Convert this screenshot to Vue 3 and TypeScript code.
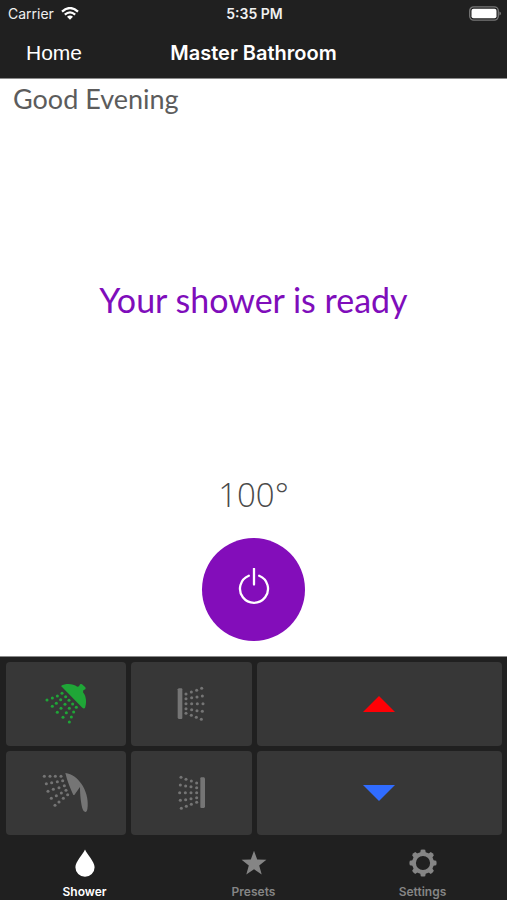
<script setup lang="ts">
import { ref } from 'vue'

type Point = [number, number]

interface Outlet {
  id: string
  label: string
  shape: string
  dots: Point[]
}

const overheadDots: Point[] = [
  [60, 40], [46, 48], [31, 54], [15, 60],
  [71, 50], [56, 59], [43, 70], [31, 79],
  [81, 61], [69, 73], [57, 85], [46, 97],
  [92, 72], [82, 85], [73, 98], [63, 112],
  [103, 82], [95, 96], [88, 111], [82, 126],
]

const handheldDots: Point[] = [
  [7, 22], [24, 22], [40, 22], [57, 22],
  [13, 44], [29, 41], [46, 38], [62, 35],
  [18, 67], [34, 61], [51, 56], [67, 50],
  [28, 88], [43, 80], [58, 72], [72, 64],
  [39, 109], [51, 99], [64, 88], [77, 77],
]

const sideDots: Point[] = [
  [57, 42], [57, 56], [57, 71], [57, 86], [57, 100],
  [73, 36], [74, 53], [74, 71], [74, 89], [73, 106],
  [89, 31], [90, 51], [91, 71], [90, 92], [88, 112],
  [104, 25], [106, 48], [108, 71], [106, 94], [103, 118],
]

const outlets: Outlet[] = [
  {
    id: 'overhead',
    label: 'Overhead shower',
    shape: 'M57 18C70 10 92 10 106 20L111 19L114 13Q117 11 120 13L130 22Q132 25 130 28L124 31L123 37C134 50 134 70 129 84Q125 87 121 83Z',
    dots: overheadDots,
  },
  {
    id: 'left',
    label: 'Left body spray',
    shape: 'M35 25H43Q46 25 46 28V114Q46 117 43 117H35L32 114V28Z',
    dots: sideDots,
  },
  {
    id: 'handheld',
    label: 'Handheld shower',
    shape: 'M70 12C90 14 106 28 118 44C132 64 139 90 137 112Q136 129 131 129Q125 130 122 121C117 105 114 78 114 54L97 78L94 78C86 60 76 38 70 12Z',
    dots: handheldDots,
  },
  {
    id: 'right',
    label: 'Right body spray',
    shape: 'M111 25H103Q100 25 100 28V114Q100 117 103 117H111L114 114V28Z',
    dots: sideDots.map(([x, y]): Point => [146 - x, y]),
  },
]

const tabs = [
  { id: 'shower', label: 'Shower' },
  { id: 'presets', label: 'Presets' },
  { id: 'settings', label: 'Settings' },
]

const gearTeeth = [0, 45, 90, 135, 180, 225, 270, 315]

const activeOutlet = ref('overhead')
const activeTab = ref('shower')
const temperature = ref(100)
</script>

<template>
  <div class="app">
    <header class="top">
      <div class="status">
        <div class="carrier">
          <span>Carrier</span>
          <svg class="wifi" viewBox="0 0 18 13" aria-hidden="true">
            <path d="M1 4.6Q9 -2.6 17 4.6" />
            <path d="M3.8 7.6Q9 3 14.2 7.6" />
            <path class="solid" d="M6 9.7Q9 7.2 12 9.7L9 12.8Z" />
          </svg>
        </div>
        <span class="clock">5:35 PM</span>
        <svg class="battery" viewBox="0 0 32 15" aria-hidden="true">
          <rect class="case" x="0.7" y="0.9" width="28.6" height="13.2" rx="4" />
          <rect class="charge" x="2.5" y="2.7" width="25" height="9.6" rx="2" />
          <path class="tip" d="M30.4 5.5Q32 6 32 7.5T30.4 9.5Z" />
        </svg>
      </div>
      <nav class="bar">
        <a class="home" href="#home">Home</a>
        <h1>Master Bathroom</h1>
      </nav>
    </header>

    <main class="main">
      <p class="greeting">Good Evening</p>
      <div class="stage">
        <p class="message">Your shower is ready</p>
      </div>
      <p class="temp">{{ temperature }}°</p>
      <button class="power" type="button" aria-label="Power">
        <svg viewBox="0 0 40 40" aria-hidden="true">
          <path d="M14.8 7.8A14 14 0 1 0 25.2 7.8" />
          <path d="M20 0.8V16.5" />
        </svg>
      </button>
    </main>

    <section class="controls">
      <div class="outlets">
        <button
          v-for="o in outlets"
          :key="o.id"
          class="tile"
          :class="{ on: activeOutlet === o.id }"
          type="button"
          :aria-label="o.label"
          @click="activeOutlet = o.id"
        >
          <svg class="spray" viewBox="0 0 144 144" aria-hidden="true">
            <path :d="o.shape" />
            <circle v-for="(d, i) in o.dots" :key="i" :cx="d[0]" :cy="d[1]" r="4.6" />
          </svg>
        </button>
      </div>
      <div class="heat">
        <button class="tile warmer" type="button" aria-label="Warmer" @click="temperature++">
          <svg class="arrow" viewBox="0 0 32 16" aria-hidden="true"><path d="M16 0L32 16H0Z" /></svg>
        </button>
        <button class="tile cooler" type="button" aria-label="Cooler" @click="temperature--">
          <svg class="arrow" viewBox="0 0 32 16" aria-hidden="true"><path d="M0 0H32L16 16Z" /></svg>
        </button>
      </div>
    </section>

    <nav class="tabs">
      <button
        v-for="t in tabs"
        :key="t.id"
        class="tab"
        :class="{ current: activeTab === t.id }"
        type="button"
        @click="activeTab = t.id"
      >
        <svg viewBox="0 0 28 28" aria-hidden="true">
          <path v-if="t.id === 'shower'" d="M14 0.5C16 5.5 23.6 12.5 23.6 18.3A9.6 9.4 0 0 1 4.4 18.3C4.4 12.5 12 5.5 14 0.5Z" />
          <path v-else-if="t.id === 'presets'" d="M14 1.8L17.2 10.4L26.4 10.8L19.2 16.5L21.7 25.4L14 20.3L6.3 25.4L8.8 16.5L1.6 10.8L10.8 10.4Z" />
          <g v-else>
            <circle class="ring" cx="14" cy="14" r="9" />
            <path v-for="a in gearTeeth" :key="a" d="M11 5L11.8 0.8Q14 0 16.2 0.8L17 5Z" :transform="`rotate(${a} 14 14)`" />
          </g>
        </svg>
        <span>{{ t.label }}</span>
      </button>
    </nav>
  </div>
</template>

<style>
body {
  margin: 0;
  background: #202020;
}
</style>

<style scoped>
.app {
  display: flex;
  flex-direction: column;
  min-height: 100vh;
  background: #202020;
  color: #fff;
  font-family: Inter, "Liberation Sans", sans-serif;
}

button {
  border: 0;
  padding: 0;
  font: inherit;
  color: inherit;
  cursor: pointer;
}

svg {
  display: block;
}

.top {
  border-bottom: 1px solid #8a8a8a;
}

.status {
  display: grid;
  grid-template-columns: 1fr auto 1fr;
  align-items: center;
  height: 27px;
  padding: 0 6px 0 8px;
  font-size: 14px;
  color: #f0f0f0;
}

.carrier {
  display: flex;
  align-items: center;
  gap: 7px;
}

.wifi {
  width: 18px;
  height: 13px;
  fill: none;
  stroke: #fff;
  stroke-width: 2.2;
}

.wifi .solid {
  fill: #fff;
  stroke: none;
}

.clock {
  font-weight: 600;
}

.battery {
  justify-self: end;
  width: 32px;
  height: 15px;
}

.case {
  fill: none;
  stroke: #777;
  stroke-width: 1.3;
}

.charge {
  fill: #fff;
}

.tip {
  fill: #777;
}

.bar {
  display: grid;
  grid-template-columns: 1fr auto 1fr;
  align-items: center;
  height: 51px;
  padding: 0 26px;
}

.home {
  color: #fff;
  font-family: "Liberation Sans", sans-serif;
  font-size: 21px;
  text-decoration: none;
}

h1 {
  margin: 0;
  font-size: 20px;
  font-weight: 600;
}

.main {
  flex: 1;
  display: flex;
  flex-direction: column;
  align-items: center;
  background: #fff;
  border-bottom: 1px solid #8a8a8a;
  padding-bottom: 15px;
  font-family: Lato, sans-serif;
}

.main p {
  margin: 0;
}

.greeting {
  align-self: flex-start;
  padding-left: 13px;
  font-size: 27px;
  line-height: 40px;
  color: #5c5c5c;
}

.stage {
  flex: 1;
  display: grid;
  place-items: center;
  padding-top: 8px;
}

.message {
  font-size: 34px;
  line-height: 44px;
  color: #7f0dbb;
}

.temp {
  font-family: "Open Sans", sans-serif;
  font-size: 33px;
  font-weight: 350;
  line-height: 44px;
  color: #4a4a4a;
}

.power {
  display: grid;
  place-items: center;
  width: 103px;
  height: 103px;
  margin-top: 21px;
  border-radius: 50%;
  background: #830dba;
}

.power svg {
  width: 40px;
  height: 40px;
  margin-bottom: 4px;
  fill: none;
  stroke: #fff;
  stroke-width: 2.3;
  stroke-linecap: round;
}

.controls {
  display: grid;
  grid-template-columns: 1fr 1fr;
  gap: 5px;
  padding: 5px 5px 5px 6px;
}

.outlets {
  display: grid;
  grid-template-columns: 1fr 1fr;
  gap: 5px;
}

.heat {
  display: grid;
  gap: 5px;
}

.tile {
  display: grid;
  place-items: center;
  height: 84px;
  border-radius: 4px;
  background: #373737;
}

.spray {
  width: 48px;
  height: 48px;
  fill: #757575;
}

.on .spray {
  fill: #1fa637;
}

.arrow {
  width: 32px;
  height: 16px;
}

.warmer {
  fill: #ff0005;
}

.cooler {
  fill: #306cff;
}

.tabs {
  display: grid;
  grid-template-columns: repeat(3, 1fr);
  padding-top: 9px;
}

.tab {
  display: flex;
  flex-direction: column;
  align-items: center;
  gap: 7px;
  height: 51px;
  background: none;
  color: #858585;
  font-size: 12px;
  font-weight: 600;
  line-height: 16px;
}

.tab svg {
  width: 28px;
  height: 28px;
  fill: currentColor;
}

.ring {
  fill: none;
  stroke: currentColor;
  stroke-width: 3.8;
}

.current {
  color: #fff;
}
</style>
